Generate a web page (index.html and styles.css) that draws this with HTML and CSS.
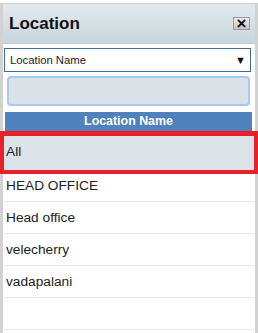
FILE: index.html
```html
<!DOCTYPE html>
<html lang="en">
<head>
    <meta charset="UTF-8">
    <meta name="viewport" content="width=device-width, initial-scale=1.0">
    <title>Location</title>
    <link rel="stylesheet" href="styles.css">
</head>
<body>
    <div class="panel">
        <header class="panel-header">
            <h1>Location</h1>
            <button class="close-btn">×</button>
        </header>

        <div class="select-box">
            <span>Location Name</span>
            <span class="arrow">▼</span>
        </div>

        <input type="text" class="search-input">

        <div class="list-title">Location Name</div>

        <div class="list">
            <div class="list-item selected">All</div>
            <div class="list-item">HEAD OFFICE</div>
            <div class="list-item">Head office</div>
            <div class="list-item">velecherry</div>
            <div class="list-item">vadapalani</div>
            <div class="list-item"></div>
        </div>
    </div>
</body>
</html>
```

FILE: styles.css
```css
/* General */
body {
    margin: 0;
    padding: 0;
    background-color: #fff;
    font-family: 'Liberation Sans', Arial, sans-serif;
    color: #222;
    overflow: hidden;
}

.panel {
    margin-top: 3px;
    border: 3px solid #d2d2d2;
    border-top-width: 1px;
    border-bottom: none;
    background-color: #fff;
    height: 330px;
}

/* Header */
.panel-header {
    display: flex;
    justify-content: space-between;
    align-items: center;
    height: 39px;
    padding: 0 5px 0 6px;
    background: linear-gradient(to bottom, #e3eaee, #c8d5dc);
    border-bottom: 1px solid #c0ccd3;
}

.panel-header h1 {
    margin: 0;
    font-size: 17px;
    font-weight: bold;
    color: #111;
}

.close-btn {
    width: 17px;
    height: 13px;
    padding: 0;
    margin-top: 0;
    border: 1px solid #9a9a9a;
    background: linear-gradient(to bottom, #ececec, #c4c4c4);
    font-family: 'Liberation Sans', Arial, sans-serif;
    font-size: 17px;
    font-weight: bold;
    line-height: 10px;
    color: #111;
}

/* Dropdown */
.select-box {
    display: flex;
    justify-content: space-between;
    align-items: center;
    height: 22px;
    margin: 4px 4px 0 1px;
    padding: 0 4px 0 5px;
    border: 1px solid #3f6f96;
    background-color: #fff;
    font-size: 11.3px;
    color: #222;
}

.select-box .arrow {
    font-size: 11px;
    color: #111;
}

/* Search */
.search-input {
    display: block;
    box-sizing: border-box;
    width: 243px;
    height: 30px;
    margin: 4px 0 0 4px;
    border: 2px solid #a8c8f0;
    border-radius: 4px;
    background-color: #dbe2e7;
}

.list-title {
    height: 19px;
    margin: 6px 3px 0 2px;
    background-color: #4f81bd;
    color: #fff;
    font-size: 12.4px;
    font-weight: bold;
    text-align: center;
    line-height: 19px;
}

/* List */
.list {
    margin: 5px 1px 0 1px;
}

.list-item {
    position: relative;
    height: 31px;
    padding-left: 2px;
    border-bottom: 1px solid #e6e6e6;
    font-size: 13.7px;
    line-height: 32px;
    color: #222;
}

.list-item.selected {
    height: 34px;
    line-height: 32px;
    background-color: #dbe3e8;
    border-bottom: none;
}

.list-item.selected::after {
    content: '';
    position: absolute;
    top: -5px;
    bottom: -4px;
    left: -4px;
    right: -4px;
    border: 4px solid #e8202a;
    border-top-width: 5px;
}
```
